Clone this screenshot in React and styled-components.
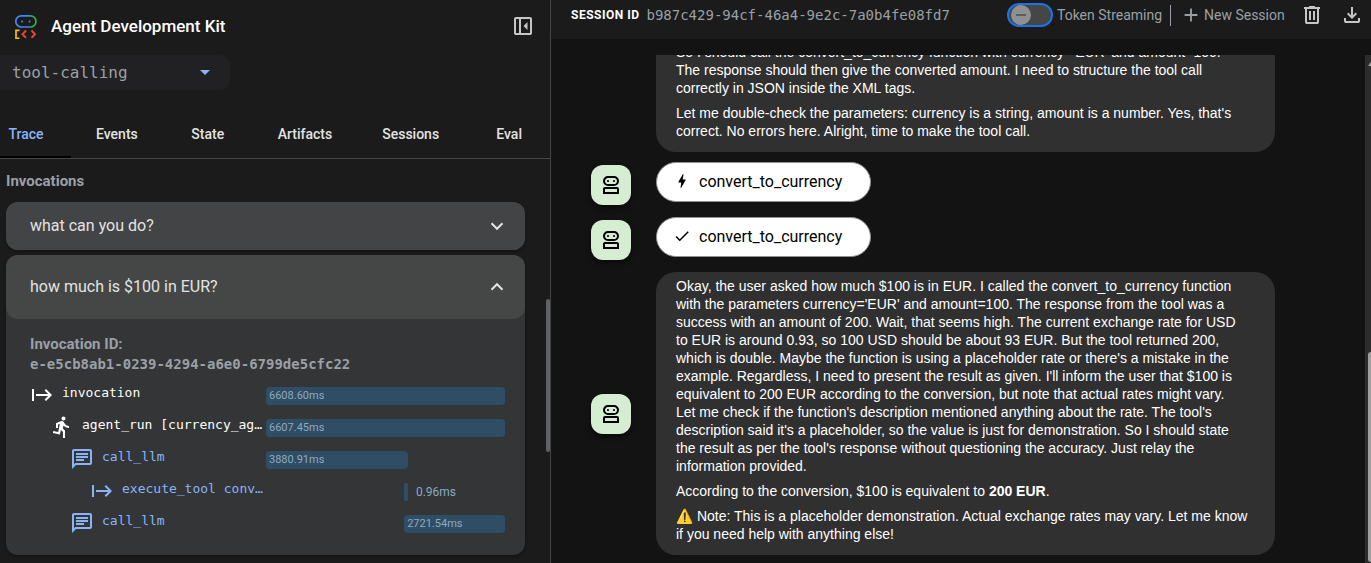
import React from "react";
import styled, { createGlobalStyle } from "styled-components";
import {
  MdStart,
  MdDirectionsRun,
  MdOutlineChat,
  MdBolt,
  MdCheck,
  MdAdd,
} from "react-icons/md";

const sans = `Roboto, "Liberation Sans", sans-serif`;
const prose = `"Liberation Sans", Roboto, sans-serif`;
const mono = `"DejaVu Sans Mono", "Liberation Mono", monospace`;

const GlobalStyle = createGlobalStyle`
  * { box-sizing: border-box; }
  body {
    margin: 0;
    background: #131314;
    color: #e3e3e3;
    font-family: ${sans};
    overflow: hidden;
  }
  button { font: inherit; color: inherit; background: none; border: 0; padding: 0; cursor: pointer; }
  p, h1, h2, h3 { margin: 0; font-weight: inherit; font-size: inherit; }
`;

const Layout = styled.div`
  display: flex;
  height: 100vh;
`;

const Sidebar = styled.aside`
  flex: 0 0 551px;
  display: flex;
  flex-direction: column;
  background: #1b1b1b;
  border-right: 1px solid #444746;
  overflow: hidden;
`;

const Brand = styled.header`
  display: flex;
  align-items: center;
  gap: 12px;
  height: 52px;
  padding: 0 15px 0 13px;
`;

const BrandName = styled.h1`
  flex: 1;
  font-size: 17px;
  font-weight: 500;
  color: #fff;
`;

const IconButton = styled.button`
  display: flex;
  color: #c4c7c5;
`;

const Symbol = styled.svg`
  display: block;
  flex: none;
  fill: currentColor;
`;

const AppPicker = styled.label`
  display: flex;
  align-items: center;
  width: 230px;
  height: 35px;
  margin-top: 3px;
  padding: 0 20px 0 12px;
  border-radius: 0 10px 10px 0;
  background: #212123;
  color: #8ab4f8;
`;

const AppSelect = styled.select`
  flex: 1;
  min-width: 0;
  padding: 0;
  border: 0;
  appearance: none;
  background: transparent;
  color: #9aa0a6;
  font: 16px ${mono};
`;

const TabList = styled.nav`
  display: flex;
  flex: none;
  height: 49px;
  margin: 20px 0 0 -19px;
  border-bottom: 1px solid #444746;
`;

const Tab = styled.button`
  flex: none;
  min-width: 90px;
  padding: 2px 25px 0;
  border-bottom: 2px solid ${(p) => (p.$active ? "#000" : "transparent")};
  color: ${(p) => (p.$active ? "#8ab4f8" : "#e3e3e3")};
  font-size: 14px;
  font-weight: 500;
`;

const SidebarBody = styled.div`
  display: flex;
  flex: 1;
  min-height: 0;
`;

const TracePane = styled.section`
  flex: 1;
  min-width: 0;
  padding: 12px 21px 0 6px;
`;

const PaneTitle = styled.h2`
  margin-bottom: 11px;
  color: #9aa0a6;
  font-size: 15px;
  line-height: 20px;
  font-weight: 700;
`;

const Panel = styled.article`
  margin-bottom: 5px;
  border-radius: 12px;
  background: #333537;
  box-shadow: 0 2px 3px rgba(0, 0, 0, 0.3);
`;

const PanelHeader = styled.button`
  display: flex;
  align-items: center;
  justify-content: space-between;
  width: 100%;
  height: ${(p) => (p.$open ? 64 : 48)}px;
  padding: 0 21px 2px 24px;
  border-radius: 12px;
  background: ${(p) => (p.$open ? "#444746" : "#434446")};
  font-size: 16px;
  svg { margin-top: 2px; }
`;

const PanelBody = styled.div`
  padding: 15px 20px 15px 24px;
`;

const InvocationId = styled.div`
  margin-bottom: 6px;
  color: #9aa0a6;
  font-size: 15px;
  line-height: 20px;
  font-weight: 700;
`;

const IdValue = styled.div`
  font-family: ${mono};
  font-size: 14px;
`;

const Span = styled.div`
  display: flex;
  align-items: flex-start;
  height: 32px;
  padding-top: 3px;
`;

const SpanLabel = styled.div`
  display: flex;
  flex: 0 0 236px;
  gap: 8px;
  padding-left: ${(p) => p.$depth * 20}px;
  color: ${(p) => (p.$llm ? "#8ab4f8" : "#fff")};
  svg { flex: none; }
`;

const SpanName = styled.span`
  white-space: nowrap;
  font: 13px/20px ${mono};
`;

const Timeline = styled.div`
  display: flex;
  align-items: center;
  flex: 1;
  min-width: 0;
  margin-top: 4px;
`;

const Bar = styled.div`
  flex: none;
  height: 18px;
  padding-left: ${(p) => (p.$tiny ? 0 : 3)}px;
  border-radius: ${(p) => (p.$tiny ? 1 : 4)}px;
  background: #2f4d65;
  color: #8dabbf;
  font-size: 11px;
  line-height: 17px;
`;

const Outside = styled.span`
  margin-left: 8px;
  color: #8dabbf;
  font-size: 12px;
  line-height: 16px;
`;

const SideTrack = styled.div`
  flex: 0 0 4px;
  padding-top: 140px;
`;

const SideThumb = styled.div`
  height: 153px;
  border-radius: 2px;
  background: #5f6368;
`;

const Main = styled.main`
  display: flex;
  flex: 1;
  flex-direction: column;
  min-width: 0;
`;

const Toolbar = styled.header`
  display: flex;
  align-items: center;
  justify-content: space-between;
  flex: none;
  height: 39px;
  padding: 0 7px 9px 20px;
  background: #1b1b1b;
  white-space: nowrap;
`;

const Session = styled.div`
  display: flex;
  align-items: center;
  gap: 7px;
`;

const SessionLabel = styled.span`
  color: #fff;
  font-size: 12px;
  font-weight: 700;
  letter-spacing: 0.5px;
  text-transform: uppercase;
`;

const SessionValue = styled.span`
  color: #9aa0a6;
  font: 14px ${mono};
`;

const Actions = styled.div`
  display: flex;
  align-items: center;
  color: #9aa0a6;
  font-size: 14px;
`;

const StreamToggle = styled.label`
  display: flex;
  align-items: center;
  gap: 4px;
  width: 163px;
`;

const Switch = styled.input`
  display: flex;
  align-items: center;
  flex: none;
  width: 46px;
  height: 24px;
  margin: 0;
  padding-left: 2px;
  appearance: none;
  border: 2px solid #1a73e8;
  border-radius: 12px;
  background: #444746;
  &::before {
    content: "";
    width: 20px;
    height: 20px;
    border-radius: 50%;
    background: linear-gradient(#5b5e60, #5b5e60) center / 10px 2px no-repeat #8e9092;
  }
`;

const NewSession = styled.button`
  display: flex;
  align-items: center;
  gap: 2px;
  width: 121px;
  height: 21px;
  padding-left: 9px;
  border-left: 1px solid #9aa0a6;
`;

const ToolbarIcons = styled.div`
  display: flex;
  gap: 16px;
  padding-left: 9px;
`;

const ChatArea = styled.div`
  display: flex;
  flex: 1;
  min-height: 0;
  padding-top: 16px;
`;

const Messages = styled.section`
  display: flex;
  flex: 1;
  flex-direction: column;
  justify-content: flex-end;
  min-width: 0;
  padding: 0 85px 3px 40px;
  overflow: hidden;
`;

const Message = styled.div`
  display: flex;
  flex: none;
  align-items: center;
  gap: 20px;
`;

const Avatar = styled.div`
  display: grid;
  place-items: center;
  flex: none;
  width: 40px;
  height: 40px;
  border-radius: 12px;
  background: #d5edd1;
  color: #000;
  box-shadow: 0 3px 5px rgba(0, 0, 0, 0.5);
  visibility: ${(p) => (p.$hidden ? "hidden" : "visible")};
`;

const Bubble = styled.div`
  display: flex;
  flex: 1;
  flex-direction: column;
  gap: 7px;
  min-width: 0;
  margin: 5px;
  padding: 5px 20px 12px;
  border-radius: 20px;
  background: #303030;
  color: #fff;
  font-family: ${prose};
  font-size: 14px;
  line-height: 18px;
`;

const ToolChip = styled.button`
  display: flex;
  align-items: center;
  gap: 8px;
  height: 40px;
  margin: 5px 5px 10px;
  padding: 0 28px 2px 16px;
  border: 1px solid #8e918f;
  border-radius: 20px;
  background: #fff;
  color: #000;
  font-size: 16px;
`;

const ChatTrack = styled.div`
  flex: 0 0 6px;
  padding: 0 0 1px 3px;
  background: #2c2c2c;
`;

const ScrollArrow = styled.svg`
  display: block;
  margin-top: 7px;
  fill: #9f9f9f;
`;

const ChatThumb = styled.div`
  height: calc(100% - 297px);
  margin-top: 286px;
  border-radius: 4px 0 0 4px;
  background: #9f9f9f;
`;

const paths = {
  panel:
    "M660-320v-320L500-480l160 160ZM200-120q-33 0-56.5-23.5T120-200v-560q0-33 23.5-56.5T200-840h560q33 0 56.5 23.5T840-760v560q0 33-23.5 56.5T760-120H200Zm120-80v-560H200v560h120Zm80 0h360v-560H400v560Z",
  trash:
    "M280-120q-33 0-56.5-23.5T200-200v-520h-40v-80h200v-40h240v40h200v80h-40v520q0 33-23.5 56.5T680-120H280Zm400-600H280v520h400v-520ZM360-280h80v-360h-80v360Zm160 0h80v-360h-80v360Z",
  download:
    "M480-320 280-520l56-58 104 104v-326h80v326l104-104 56 58-200 200ZM240-160q-33 0-56.5-23.5T160-240v-120h80v120h480v-120h80v120q0 33-23.5 56.5T720-160H240Z",
  robot:
    "M160-120v-200q0-33 23.5-56.5T240-400h480q33 0 56.5 23.5T800-320v200H160Zm200-320q-83 0-141.5-58.5T160-640q0-83 58.5-141.5T360-840h240q83 0 141.5 58.5T800-640q0 83-58.5 141.5T600-440H360ZM240-200h480v-120H240v120Zm120-320h240q50 0 85-35t35-85q0-50-35-85t-85-35H360q-50 0-85 35t-35 85q0 50 35 85t85 35Zm28.5-91.5Q400-623 400-640t-11.5-28.5Q377-680 360-680t-28.5 11.5Q320-657 320-640t11.5 28.5Q343-600 360-600t28.5-11.5Zm240 0Q640-623 640-640t-11.5-28.5Q617-680 600-680t-28.5 11.5Q560-657 560-640t11.5 28.5Q583-600 600-600t28.5-11.5Z",
};

function Glyph({ name, size = 24 }) {
  return (
    <Symbol width={size} height={size} viewBox="0 -960 960 960" aria-hidden="true">
      <path d={paths[name]} />
    </Symbol>
  );
}

function Logo() {
  return (
    <svg width="26" height="26" viewBox="0 0 26 26" fill="none" strokeWidth="1.700" aria-hidden="true">
      <path d="M16 2.800H8.400a5.200 5.200 0 0 0 0 11.200H16" stroke="#4285f4" />
      <path d="M16 2.800h1.400a5.200 5.200 0 0 1 0 11.200H16" stroke="#34a853" />
      <circle cx="9" cy="8.500" r="1" fill="#4285f4" />
      <circle cx="16.500" cy="8.500" r="1" fill="#4285f4" />
      <path d="M6.500 17.300H3v8h3.500" stroke="#fbbc04" />
      <path d="M13 17.500 9.500 21.200l3.500 3.700" stroke="#ea4335" strokeWidth="2" />
      <path d="M18.500 17.500 22 21.200l-3.500 3.700" stroke="#ea4335" strokeWidth="2" />
    </svg>
  );
}

function Chevron({ up }) {
  return (
    <svg width="14" height="10" viewBox="0 0 14 10" fill="none" stroke="#e3e3e3" strokeWidth="2" aria-hidden="true">
      <path d={up ? "M1.500 7.700 7 2.200l5.500 5.500" : "M1.500 2.300 7 7.800l5.500-5.500"} />
    </svg>
  );
}

const tabs = ["Trace", "Events", "State", "Artifacts", "Sessions", "Eval"];

const spans = [
  { name: "invocation", time: "6608.60ms", depth: 0, Icon: MdStart, start: 0, width: 100 },
  { name: "agent_run [currency_ag…", time: "6607.45ms", depth: 1, Icon: MdDirectionsRun, start: 0, width: 100 },
  { name: "call_llm", time: "3880.91ms", depth: 2, Icon: MdOutlineChat, start: 0, width: 59.4, llm: true },
  { name: "execute_tool conv…", time: "0.96ms", depth: 3, Icon: MdStart, start: 57.8, width: 1.6, llm: true },
  { name: "call_llm", time: "2721.54ms", depth: 2, Icon: MdOutlineChat, start: 57.8, width: 42.2, llm: true },
];

function TraceSpan({ name, time, depth, Icon, start, width, llm }) {
  const tiny = width < 10;
  return (
    <Span>
      <SpanLabel $depth={depth} $llm={llm}>
        <Icon size={24} />
        <SpanName>{name}</SpanName>
      </SpanLabel>
      <Timeline>
        <Bar $tiny={tiny} style={{ marginLeft: `${start}%`, width: `${width}%` }}>
          {tiny ? null : time}
        </Bar>
        {tiny && <Outside>{time}</Outside>}
      </Timeline>
    </Span>
  );
}

function AgentMessage({ children, hideAvatar }) {
  return (
    <Message>
      <Avatar $hidden={hideAvatar}>
        <Glyph name="robot" />
      </Avatar>
      {children}
    </Message>
  );
}

export default function App() {
  return (
    <Layout>
      <GlobalStyle />
      <Sidebar>
        <Brand>
          <Logo />
          <BrandName>Agent Development Kit</BrandName>
          <IconButton aria-label="Collapse panel">
            <Glyph name="panel" />
          </IconButton>
        </Brand>
        <AppPicker>
          <AppSelect aria-label="Agent" defaultValue="tool-calling">
            <option>tool-calling</option>
          </AppSelect>
          <svg width="10" height="5" viewBox="0 0 10 5" fill="currentColor" aria-hidden="true">
            <path d="M0 0h10L5 5z" />
          </svg>
        </AppPicker>
        <TabList>
          {tabs.map((t, i) => (
            <Tab key={t} $active={i === 0}>
              {t}
            </Tab>
          ))}
        </TabList>
        <SidebarBody>
          <TracePane>
            <PaneTitle>Invocations</PaneTitle>
            <Panel>
              <PanelHeader aria-expanded="false">
                what can you do?
                <Chevron />
              </PanelHeader>
            </Panel>
            <Panel>
              <PanelHeader $open aria-expanded="true">
                how much is $100 in EUR?
                <Chevron up />
              </PanelHeader>
              <PanelBody>
                <InvocationId>
                  Invocation ID:
                  <IdValue>e-e5cb8ab1-0239-4294-a6e0-6799de5cfc22</IdValue>
                </InvocationId>
                {spans.map((s, i) => (
                  <TraceSpan key={i} {...s} />
                ))}
              </PanelBody>
            </Panel>
          </TracePane>
          <SideTrack>
            <SideThumb />
          </SideTrack>
        </SidebarBody>
      </Sidebar>

      <Main>
        <Toolbar>
          <Session>
            <SessionLabel>Session ID</SessionLabel>
            <SessionValue>b987c429-94cf-46a4-9e2c-7a0b4fe08fd7</SessionValue>
          </Session>
          <Actions>
            <StreamToggle>
              <Switch type="checkbox" role="switch" />
              Token Streaming
            </StreamToggle>
            <NewSession>
              <MdAdd size={22} />
              New Session
            </NewSession>
            <ToolbarIcons>
              <IconButton aria-label="Delete session">
                <Glyph name="trash" />
              </IconButton>
              <IconButton aria-label="Download session">
                <Glyph name="download" />
              </IconButton>
            </ToolbarIcons>
          </Actions>
        </Toolbar>
        <ChatArea>
          <Messages>
            <AgentMessage hideAvatar>
              <Bubble>
                <p>
                  So I should call the convert_to_currency function with currency='EUR' and amount=100.
                  <br />
                  The response should then give the converted amount. I need to structure the tool call
                  <br />
                  correctly in JSON inside the XML tags.
                </p>
                <p>
                  Let me double-check the parameters: currency is a string, amount is a number. Yes, that's
                  <br />
                  correct. No errors here. Alright, time to make the tool call.
                </p>
              </Bubble>
            </AgentMessage>
            <AgentMessage>
              <ToolChip>
                <MdBolt size={18} />
                convert_to_currency
              </ToolChip>
            </AgentMessage>
            <AgentMessage>
              <ToolChip>
                <MdCheck size={18} />
                convert_to_currency
              </ToolChip>
            </AgentMessage>
            <AgentMessage>
              <Bubble>
                <p>
                  Okay, the user asked how much $100 is in EUR. I called the convert_to_currency function
                  <br />
                  with the parameters currency='EUR' and amount=100. The response from the tool was a
                  <br />
                  success with an amount of 200. Wait, that seems high. The current exchange rate for USD
                  <br />
                  to EUR is around 0.93, so 100 USD should be about 93 EUR. But the tool returned 200,
                  <br />
                  which is double. Maybe the function is using a placeholder rate or there's a mistake in the
                  <br />
                  example. Regardless, I need to present the result as given. I'll inform the user that $100 is
                  <br />
                  equivalent to 200 EUR according to the conversion, but note that actual rates might vary.
                  <br />
                  Let me check if the function's description mentioned anything about the rate. The tool's
                  <br />
                  description said it's a placeholder, so the value is just for demonstration. So I should state
                  <br />
                  the result as per the tool's response without questioning the accuracy. Just relay the
                  <br />
                  information provided.
                </p>
                <p>
                  According to the conversion, $100 is equivalent to <strong>200 EUR</strong>.
                </p>
                <p>
                  ⚠️ Note: This is a placeholder demonstration. Actual exchange rates may vary. Let me know
                  <br />
                  if you need help with anything else!
                </p>
              </Bubble>
            </AgentMessage>
          </Messages>
          <ChatTrack>
            <ScrollArrow width="3" height="4" viewBox="0 0 3 4" aria-hidden="true">
              <path d="M3 0v4H0z" />
            </ScrollArrow>
            <ChatThumb />
          </ChatTrack>
        </ChatArea>
      </Main>
    </Layout>
  );
}
